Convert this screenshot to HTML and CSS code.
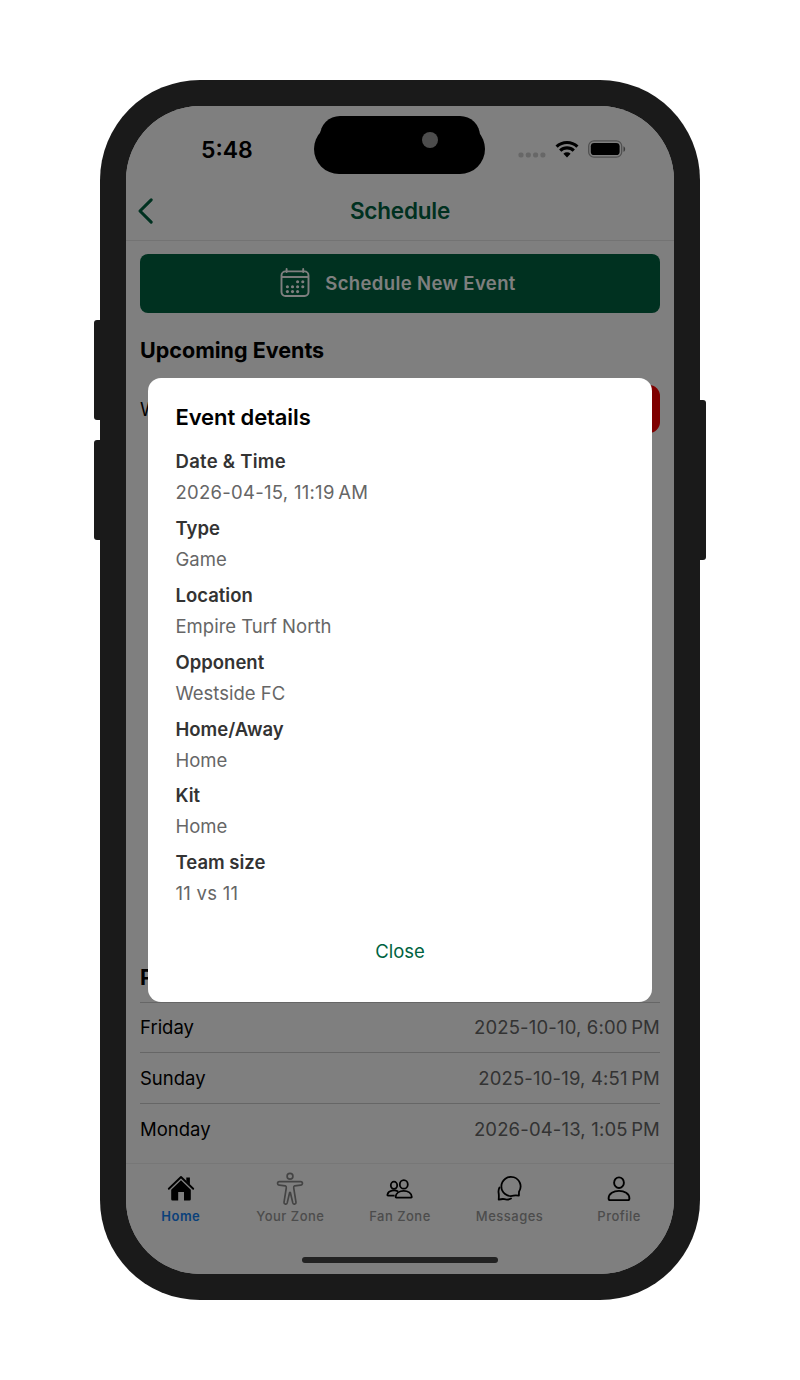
FILE: index.html
```html
<!DOCTYPE html>
<html lang="en">
<head>
<meta charset="utf-8">
<title>Schedule</title>
<link rel="stylesheet" href="styles.css">
</head>
<body>
<div class="phone">
  <i class="key key-up"></i><i class="key key-down"></i><i class="key key-power"></i>
  <div class="screen">
    <div class="status">
      <span class="clock">5:48</span>
      <div class="signals">
        <svg class="cell" width="28" height="6" viewBox="0 0 28 6"><g fill="#cfcfcf"><rect x="0.5" y="0.5" width="5" height="5" rx="1.8"/><rect x="7.8" y="0.5" width="5" height="5" rx="1.8"/><rect x="15.1" y="0.5" width="5" height="5" rx="1.8"/><rect x="22.4" y="0.5" width="5" height="5" rx="1.8"/></g></svg>
        <svg class="wifi" width="24" height="18" viewBox="0 0 24 18"><g fill="none" stroke="#000" stroke-width="3.2"><path d="M1.6 6.7a15 15 0 0 1 20.8 0"/><path d="M5.2 10.6a9.8 9.8 0 0 1 13.6 0"/></g><path d="M12 17.4l-3.6-3.7a5.2 5.2 0 0 1 7.2 0z"/></svg>
        <svg class="battery" width="38" height="18" viewBox="0 0 38 18"><rect x=".7" y=".8" width="33" height="16.4" rx="5.3" fill="none" stroke="#a0a0a0" stroke-width="1.3"/><rect x="2.8" y="2.9" width="28.8" height="12.2" rx="3.4"/><path d="M35.5 6.2c2.2.9 2.2 4.7 0 5.6z" fill="#777"/></svg>
      </div>
    </div>
    <header class="nav">
      <svg class="back" width="18" height="28" viewBox="0 0 18 28"><path d="M15.2 2.8L4 14l11.2 11.2" fill="none" stroke="#006341" stroke-width="3.1" stroke-linecap="round" stroke-linejoin="round"/></svg>
      <h1 class="nav-title">Schedule</h1>
      <span></span>
    </header>
    <main class="content">
      <button class="new-event">
        <svg width="30" height="30" viewBox="0 0 30 30"><g fill="none" stroke="#fff" stroke-width="1.9"><rect x="1.5" y="3.4" width="27" height="24.6" rx="4"/><path d="M1.5 9h27"/><path d="M6.6 1v3M23.2 1v3" stroke-linecap="round"/></g><g fill="#fff"><circle cx="17.6" cy="13.7" r="1.55"/><circle cx="22.8" cy="13.7" r="1.55"/><circle cx="7.4" cy="18.7" r="1.55"/><circle cx="12.5" cy="18.7" r="1.55"/><circle cx="17.6" cy="18.7" r="1.55"/><circle cx="22.8" cy="18.7" r="1.55"/><circle cx="7.4" cy="23.6" r="1.55"/><circle cx="12.5" cy="23.6" r="1.55"/><circle cx="17.6" cy="23.6" r="1.55"/></g></svg>
        <span>Schedule New Event</span>
      </button>
      <h2 class="section upcoming">Upcoming Events</h2>
      <div class="event"><span>W</span><i class="cancel"></i></div>
      <h2 class="section past">P</h2>
      <div class="row"><span>Friday</span><span class="when">2025-10-10, 6:00&#8201;PM</span></div>
      <div class="row"><span>Sunday</span><span class="when">2025-10-19, 4:51&#8201;PM</span></div>
      <div class="row"><span>Monday</span><span class="when">2026-04-13, 1:05&#8201;PM</span></div>
    </main>
    <nav class="tabs">
      <div class="tab active"><svg width="34" height="34" viewBox="0 0 34 34"><path d="M4.8 16.8L17 5l12.2 11.8" fill="none" stroke="#000" stroke-width="1.9" stroke-linecap="round" stroke-linejoin="round"/><path d="M22.3 5.5h3.6v7l-3.6-3.4zM17 8.3l9.8 9.5v9.4a1.3 1.3 0 0 1-1.3 1.3H20v-8.6h-5.8v8.6H8.5a1.3 1.3 0 0 1-1.3-1.3v-9.4z"/></svg><span>Home</span></div>
      <div class="tab"><svg width="34" height="34" viewBox="0 0 34 34"><g fill="none" stroke="#888" stroke-width="1.7" stroke-linejoin="round"><circle cx="17" cy="4.3" r="2.9"/><path d="M6.300 9.600h21.400a1.750 1.750 0 0 1 0 3.500l-6.100.7c-1 .2-1 1-.9 2l2.300 14.600c.2 2.100-2.700 2.400-3.200.5L17.400 20.700q-.4-.8-.8 0l-2.400 10.200c-.5 1.900-3.400 1.600-3.200-.5l2.300-14.600c.1-1 .1-1.800-.9-2l-6.100-.7a1.750 1.750 0 0 1 0-3.500z"/></g></svg><span>Your Zone</span></div>
      <div class="tab"><svg width="34" height="34" viewBox="0 0 34 34"><g fill="none" stroke="#000" stroke-width="1.8" stroke-linejoin="round"><ellipse cx="11" cy="13.300" rx="3.200" ry="3.600"/><ellipse cx="20.800" cy="12.400" rx="4" ry="4.300"/><path d="M12.600 25.100c0-8.400 16.200-8.400 16.200 0q0 .5-.6.5H13.200q-.6 0-.6-.5z"/><path d="M11.600 23.600H5.200c-.8 0-.9-.4-.7-1.200 1-3.900 7.200-5 10.600-2.800"/></g></svg><span>Fan Zone</span></div>
      <div class="tab"><svg width="34" height="34" viewBox="0 0 34 34"><g fill="none" stroke="#000" stroke-width="1.8" stroke-linecap="round" stroke-linejoin="round"><path d="M25.900 23.700l.1-4a9.600 9.600 0 1 0-5.500 4c1.700-.5 2.400-.5 5.400 0z"/><path d="M6.500 15.500a9 9 0 0 0-.8 6c.3 1.700.2 3.300 0 6.200 2.500-.7 4-1 5.600-.5 2.500.8 4.800.4 6.700-.7"/></g></svg><span>Messages</span></div>
      <div class="tab"><svg width="34" height="34" viewBox="0 0 34 34"><g fill="none" stroke="#000" stroke-width="1.9"><ellipse cx="17" cy="10.700" rx="4.900" ry="5.300"/><path d="M6.600 26.500c0-10.200 20.800-10.200 20.800 0q0 1.600-1.600 1.600H8.200q-1.600 0-1.600-1.600z"/></g></svg><span>Profile</span></div>
    </nav>
    <div class="home-area"></div>
    <div class="backdrop">
      <section class="modal">
        <h2 class="modal-title">Event details</h2>
        <dl class="details">
          <div><dt class="wide">Date &amp; Time</dt><dd class="wide">2026-04-15, 11:19&#8201;AM</dd></div>
          <div><dt>Type</dt><dd>Game</dd></div>
          <div><dt>Location</dt><dd>Empire Turf North</dd></div>
          <div><dt>Opponent</dt><dd>Westside FC</dd></div>
          <div><dt>Home/Away</dt><dd>Home</dd></div>
          <div><dt>Kit</dt><dd>Home</dd></div>
          <div><dt>Team size</dt><dd class="wide">11 vs 11</dd></div>
        </dl>
        <button class="close">Close</button>
      </section>
    </div>
    <i class="home-bar"></i>
    <i class="island"></i>
    <i class="notch"><i class="lens"></i></i>
  </div>
</div>
</body>
</html>
```

FILE: styles.css
```css
* { box-sizing: border-box; margin: 0; }
body {
  width: 800px;
  height: 1380px;
  display: grid;
  place-items: center;
  background: #fff;
  color: #000;
  font-family: Inter, "Liberation Sans", sans-serif;
  overflow: hidden;
}
button { border: 0; background: none; font-family: inherit; }
.phone {
  position: relative;
  width: 600px;
  height: 1220px;
  padding: 26px;
  background: #1a1a1a;
  border-radius: 100px;
}
.key { position: absolute; width: 6px; height: 100px; background: #1a1a1a; }
.key-up { left: -6px; top: 240px; border-radius: 3px 0 0 3px; }
.key-down { left: -6px; top: 360px; border-radius: 3px 0 0 3px; }
.key-power { right: -6px; top: 320px; height: 160px; border-radius: 0 3px 3px 0; }

.screen {
  position: relative;
  height: 1168px;
  display: flex;
  flex-direction: column;
  background: #fff;
  border-radius: 74px;
  overflow: hidden;
}
.status { height: 74px; padding: 0 48px 0 75px; display: flex; justify-content: space-between; }
.clock { padding-top: 28px; font-size: 23px; line-height: 32px; font-weight: 600; }
.signals { display: flex; padding-top: 34px; }
.cell { margin: 12px 9px 0 0; }
.wifi { margin-right: 9px; }

.nav {
  height: 60.5px;
  padding: 2px 10px 0;
  display: grid;
  grid-template-columns: 18px 1fr 18px;
  align-items: center;
  border-bottom: 1.5px solid #e6e6e6;
}
.nav-title { text-align: center; font-size: 22.5px; line-height: 30px; font-weight: 600; letter-spacing: -.2px; color: #006341; }

.content { height: 922.5px; padding: 13px 14px 0; display: flex; flex-direction: column; }
.new-event {
  height: 59px;
  flex: none;
  display: flex;
  align-items: center;
  justify-content: center;
  gap: 15px;
  background: #006341;
  border-radius: 8px;
  color: #fff;
  font-size: 18.5px;
  font-weight: 600;
  letter-spacing: .37px;
  padding: 0 4px 0 0;
}
.section { font-size: 21.5px; line-height: 30px; font-weight: 700; }
.upcoming { margin-top: 22px; }
.event { height: 48px; margin-top: 20px; display: flex; justify-content: space-between; align-items: center; font-size: 18.5px; }
.cancel { width: 80px; height: 48px; background: #f00; border-radius: 11px; }
.past { margin-top: 529px; margin-bottom: 10px; }
.row {
  height: 50.9px;
  flex: none;
  border-top: 1.3px solid #ccc;
  display: flex;
  justify-content: space-between;
  align-items: center;
  font-size: 18.5px;
}
.when { color: #666; letter-spacing: .16px; }

.tabs { height: 70px; flex: none; display: grid; grid-template-columns: repeat(5, 1fr); border-top: 1px solid #eee; }
.tab { display: flex; flex-direction: column; align-items: center; padding-top: 8px; font-size: 13px; line-height: 18px; font-weight: 500; letter-spacing: .5px; color: #999; }
.tab span { margin-top: 1px; }
.tab.active { color: #1482f5; }
.tab.active span { font-weight: 600; }
.home-area { flex: 1; }

.backdrop {
  position: absolute;
  inset: 0;
  display: grid;
  place-items: center;
  background: rgba(0, 0, 0, .5);
}
.modal {
  width: 504px;
  height: 624px;
  padding: 25px 27.5px 0;
  display: flex;
  flex-direction: column;
  background: #fff;
  border-radius: 13px;
}
.modal-title { font-size: 22px; line-height: 28px; font-weight: 600; letter-spacing: -.1px; }
.details { margin-top: 15.4px; display: grid; gap: 4.8px; font-size: 18.5px; line-height: 31px; }
.details dt { color: #333; font-weight: 600; }
.details dd { color: #666; }
.details .wide { letter-spacing: .27px; }
.close { align-self: center; margin-top: 26.6px; padding: 0; font-size: 18.5px; line-height: 30px; color: #006341; }

.home-bar { position: absolute; left: 176px; bottom: 11px; width: 196px; height: 6.5px; border-radius: 4px; background: #222; }
.island { position: absolute; left: 188.4px; top: 18px; width: 171px; height: 50px; border-radius: 25px; background: #000; }
.notch { position: absolute; left: 194px; top: 10px; width: 160px; height: 40px; border-radius: 20px; background: #000; }
.lens { position: absolute; left: 102px; top: 16px; width: 16px; height: 16px; border-radius: 50%; background: #4d4d4d; }
```
